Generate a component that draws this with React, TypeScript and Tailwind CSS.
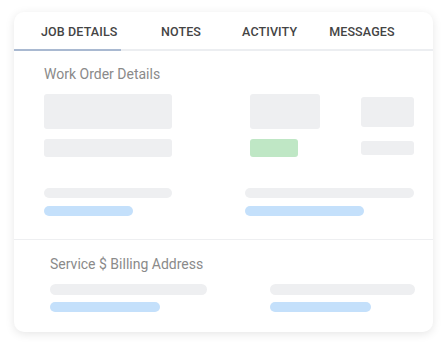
const tabs = ['JOB DETAILS', 'NOTES', 'ACTIVITY', 'MESSAGES'];

const Bar = ({ className }: { className: string }) => (
  <div className={`rounded-full ${className}`} />
);

export default function App() {
  return (
    <div className="w-[448px] h-[348px] bg-white pt-[12px] pl-[14px] font-['Roboto',sans-serif]">
      <div className="w-[419px] h-[320px] rounded-[10px] bg-white shadow-[0_2px_10px_rgba(0,0,0,0.10)] flex flex-col overflow-hidden">
        {/* tabs */}
        <div className="flex h-[39px] items-end border-b-2 border-[#eceef1]">
          {tabs.map((t, i) => (
            <div
              key={t}
              className={`h-[39px] -mb-[2px] pt-[3px] flex items-center text-[12.5px] font-medium tracking-[0.01em] text-[#444] ${
                i === 0
                  ? 'w-[107px] pl-[27px] border-b-2 border-[#a9b9d1]'
                  : i === 1
                  ? 'pl-[40px] border-b-2 border-transparent'
                  : i === 2
                  ? 'pl-[41px] border-b-2 border-transparent'
                  : 'pl-[32px] border-b-2 border-transparent'
              }`}>
              {t}
            </div>
          ))}
        </div>

        {/* work order */}
        <div className="pl-[30px] pt-[14px] h-[189px] border-b border-[#eeeff1]">
          <div className="text-[14px] text-[#8a8a8a] leading-[18px]">Work Order Details</div>
          <div className="flex mt-[11px]">
            <div className="flex flex-col gap-[10px] w-[128px]">
              <div className="h-[35px] rounded-[3px] bg-[#eeeff1]" />
              <div className="h-[18px] rounded-[3px] bg-[#eeeff1]" />
            </div>
            <div className="flex flex-col gap-[10px] ml-[78px] w-[70px]">
              <div className="h-[35px] rounded-[3px] bg-[#eeeff1]" />
              <div className="h-[18px] w-[48px] rounded-[3px] bg-[#bfe7c5]" />
            </div>
            <div className="flex flex-col gap-[14px] ml-[41px] w-[53px] pt-[3px]">
              <div className="h-[30px] rounded-[3px] bg-[#eeeff1]" />
              <div className="h-[14px] rounded-[3px] bg-[#eeeff1]" />
            </div>
          </div>
          <div className="flex mt-[31px]">
            <div className="flex flex-col gap-[8px] w-[128px]">
              <Bar className="h-[10px] bg-[#eeeff1]" />
              <Bar className="h-[10px] w-[89px] bg-[#c4e0fb]" />
            </div>
            <div className="flex flex-col gap-[8px] ml-[73px] w-[169px]">
              <Bar className="h-[10px] bg-[#eeeff1]" />
              <Bar className="h-[10px] w-[119px] bg-[#c4e0fb]" />
            </div>
          </div>
        </div>

        {/* billing */}
        <div className="pl-[36px] pt-[15px]">
          <div className="text-[14px] text-[#8a8a8a] leading-[18px]">Service $ Billing Address</div>
          <div className="flex mt-[11px]">
            <div className="flex flex-col gap-[7px] w-[157px]">
              <Bar className="h-[11px] bg-[#eeeff1]" />
              <Bar className="h-[10px] w-[110px] bg-[#c4e0fb]" />
            </div>
            <div className="flex flex-col gap-[7px] ml-[63px] w-[145px]">
              <Bar className="h-[11px] bg-[#eeeff1]" />
              <Bar className="h-[10px] w-[101px] bg-[#c4e0fb]" />
            </div>
          </div>
        </div>
      </div>
    </div>
  );
}
